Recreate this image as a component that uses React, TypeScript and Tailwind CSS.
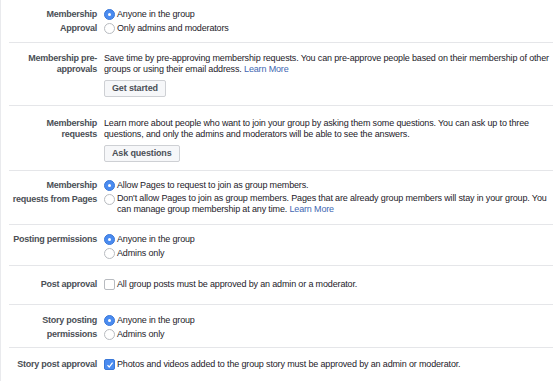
import React from "react";

const Radio = ({ checked }: { checked?: boolean }) =>
  checked ? (
    <span className="mt-[1.5px] inline-flex h-[11px] w-[11px] shrink-0 items-center justify-center rounded-full bg-[#4a8bf0] border border-[#3a78d8]">
      <span className="h-[3px] w-[3px] rounded-full bg-white" />
    </span>
  ) : (
    <span className="mt-[1.5px] inline-block h-[11px] w-[11px] shrink-0 rounded-full border border-[#b8bbc0] bg-white" />
  );

const Check = ({ checked }: { checked?: boolean }) =>
  checked ? (
    <span className="inline-flex h-[11px] w-[11px] shrink-0 items-center justify-center rounded-[2px] bg-[#4a8bf0] border border-[#3a78d8]">
      <svg width="8" height="8" viewBox="0 0 8 8">
        <path d="M1.5 4.2 L3.2 6 L6.6 1.6" stroke="white" strokeWidth="1.2" fill="none" />
      </svg>
    </span>
  ) : (
    <span className="inline-block h-[11px] w-[11px] shrink-0 rounded-[2px] border border-[#b8bbc0] bg-white" />
  );

const Opt = ({ checked, children }: { checked?: boolean; children: React.ReactNode }) => (
  <div className="flex items-start gap-[2px] leading-[14px] h-[14px] whitespace-nowrap">
    <Radio checked={checked} />
    <span className="text-[#1d2129]">{children}</span>
  </div>
);

const Row = ({
  label,
  children,
  cls,
  lead,
  last,
}: {
  label: React.ReactNode;
  children: React.ReactNode;
  cls: string;
  lead: string;
  last?: boolean;
}) => (
  <div className={`flex ${last ? "" : "border-b border-[#e5e6e9]"} ${cls}`}>
    <div className={`w-[88px] shrink-0 text-right font-bold text-[#4b4f56] whitespace-nowrap tracking-[-0.25px] ${lead}`}>
      {label}
    </div>
    <div className="ml-[7px] flex-1">{children}</div>
  </div>
);

const Btn = ({ children }: { children: React.ReactNode }) => (
  <button className="mt-[5px] h-[17px] rounded-[2px] border border-[#ced0d4] bg-[#f6f7f9] px-[7px] text-[9px] font-bold leading-[15px] text-[#4b4f56] tracking-[-0.15px]">
    {children}
  </button>
);

const Link = ({ children }: { children: React.ReactNode }) => (
  <span className="text-[#4267b2]">{children}</span>
);

export default function App() {
  return (
    <div
      className="h-[381px] w-[560px] overflow-hidden bg-white border-l border-[#e9eaed] pl-[8px] pr-[7px] text-[9px] tracking-[-0.15px] text-[#1d2129]"
      style={{ fontFamily: '"Liberation Sans", Arial, sans-serif' }}
    >
      <Row cls="pt-[7px] pb-[7px]" lead="leading-[14px]" label={<>Membership<br />Approval</>}>
        <Opt checked>Anyone in the group</Opt>
        <Opt>Only admins and moderators</Opt>
      </Row>
      <Row cls="pt-[10px] pb-[8px]" lead="leading-[11px]" label={<>Membership pre-<br />approvals</>}>
        <div className="leading-[11px] whitespace-nowrap">
          Save time by pre-approving membership requests. You can pre-approve people based on their membership of other
          <br />
          groups or using their email address. <Link>Learn More</Link>
        </div>
        <Btn>Get started</Btn>
      </Row>
      <Row cls="pt-[12px] pb-[8px]" lead="leading-[11px]" label={<>Membership<br />requests</>}>
        <div className="leading-[11px] whitespace-nowrap">
          Learn more about people who want to join your group by asking them some questions. You can ask up to three
          <br />
          questions, and only the admins and moderators will be able to see the answers.
        </div>
        <Btn>Ask questions</Btn>
      </Row>
      <Row cls="pt-[7px] pb-[9px]" lead="leading-[14px]" label={<>Membership<br />requests from Pages</>}>
        <Opt checked>Allow Pages to request to join as group members.</Opt>
        <div className="flex items-start gap-[2px] leading-[11px] whitespace-nowrap mt-[1px]">
          <span className="-mt-[1px]">
            <Radio />
          </span>
          <span>
            Don't allow Pages to join as group members. Pages that are already group members will stay in your group. You
            <br />
            can manage group membership at any time. <Link>Learn More</Link>
          </span>
        </div>
      </Row>
      <Row cls="pt-[7px] pb-[5px]" lead="leading-[14px]" label="Posting permissions">
        <Opt checked>Anyone in the group</Opt>
        <Opt>Admins only</Opt>
      </Row>
      <Row cls="pt-[12px] pb-[13px] items-center" lead="leading-[13px]" label="Post approval">
        <div className="flex items-center gap-[2px] leading-[13px]">
          <Check />
          <span>All group posts must be approved by an admin or a moderator.</span>
        </div>
      </Row>
      <Row cls="pt-[8px] pb-[6px]" lead="leading-[14px]" label={<>Story posting<br />permissions</>}>
        <Opt checked>Anyone in the group</Opt>
        <Opt>Admins only</Opt>
      </Row>
      <Row cls="pt-[10px] pb-[12px] items-center" lead="leading-[13px]" last label="Story post approval">
        <div className="flex items-center gap-[2px] leading-[13px]">
          <Check checked />
          <span>Photos and videos added to the group story must be approved by an admin or moderator.</span>
        </div>
      </Row>
    </div>
  );
}
